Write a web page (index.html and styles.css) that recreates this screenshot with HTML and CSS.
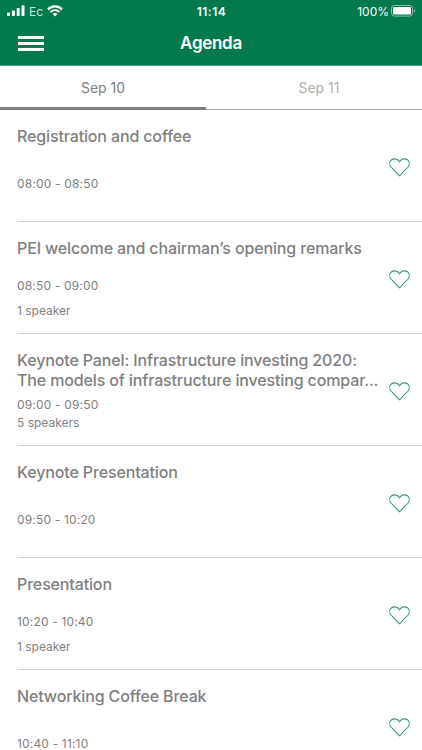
FILE: index.html
```html
<!DOCTYPE html>
<html lang="en">
<head>
    <meta charset="UTF-8">
    <meta name="viewport" content="width=device-width, initial-scale=1.0">
    <title>Agenda</title>
    <link rel="stylesheet" href="styles.css">
</head>
<body>
    <!-- Heart icon shared by all sessions -->
    <svg class="sprite" width="0" height="0">
        <symbol id="heart" viewBox="0 0 22 20">
            <path d="M11 18.8 L2.5 10 C0.2 7.6 0.2 4.3 2.2 2.3 C4.3 0.4 7.7 0.5 9.6 2.4 L11 3.9 L12.4 2.4 C14.3 0.5 17.7 0.4 19.8 2.3 C21.8 4.3 21.8 7.6 19.5 10 Z"/>
        </symbol>
    </svg>

    <header class="header">
        <div class="status">
            <div class="status-left">
                <svg width="18" height="12" viewBox="0 0 18 12" fill="#fff">
                    <rect x="0" y="7.5" width="3" height="3.5" rx="0.8"/>
                    <rect x="4.9" y="5.5" width="3" height="5.5" rx="0.8"/>
                    <rect x="9.7" y="3" width="3" height="8" rx="0.8"/>
                    <rect x="14.5" y="0.3" width="3" height="10.7" rx="0.8"/>
                </svg>
                <span class="carrier">Ec</span>
                <svg width="16" height="12" viewBox="0 0 16 12" fill="none" stroke="#fff" stroke-width="2.1">
                    <path d="M1 4.4 C5 0.4 11 0.4 15 4.4"/>
                    <path d="M3.5 7.1 C6.1 4.6 9.9 4.6 12.5 7.1"/>
                    <path d="M8 11.4 L5.6 9 C7 7.8 9 7.8 10.4 9 Z" fill="#fff" stroke="none"/>
                </svg>
            </div>
            <div class="clock">11:14</div>
            <div class="status-right">
                <span>100%</span>
                <svg width="25" height="12" viewBox="0 0 25 12">
                    <rect x="0.5" y="0.5" width="21" height="10.6" rx="2.8" fill="none" stroke="#8cc0aa"/>
                    <rect x="2" y="2" width="18" height="7.6" rx="1.4" fill="#fff"/>
                    <path d="M23 4 C24.5 4.6 24.5 7 23 7.6 Z" fill="#8cc0aa"/>
                </svg>
            </div>
        </div>
        <div class="navbar">
            <div class="menu">
                <span></span>
                <span></span>
                <span></span>
            </div>
            <h1>Agenda</h1>
        </div>
    </header>

    <nav class="tabs">
        <div class="tab active">Sep 10</div>
        <div class="tab">Sep 11</div>
    </nav>

    <main class="list">
        <div class="session single">
            <div class="info">
                <h2>Registration and coffee</h2>
                <p class="time">08:00 - 08:50</p>
            </div>
            <svg class="heart"><use href="#heart"/></svg>
        </div>
        <div class="session">
            <div class="info">
                <h2>PEI welcome and chairman’s opening remarks</h2>
                <p class="time">08:50 - 09:00</p>
                <p class="speakers">1 speaker</p>
            </div>
            <svg class="heart"><use href="#heart"/></svg>
        </div>
        <div class="session compact">
            <div class="info">
                <h2>Keynote Panel: Infrastructure investing 2020:<br>The models of infrastructure investing compar...</h2>
                <p class="time">09:00 - 09:50</p>
                <p class="speakers">5 speakers</p>
            </div>
            <svg class="heart"><use href="#heart"/></svg>
        </div>
        <div class="session single">
            <div class="info">
                <h2>Keynote Presentation</h2>
                <p class="time">09:50 - 10:20</p>
            </div>
            <svg class="heart"><use href="#heart"/></svg>
        </div>
        <div class="session">
            <div class="info">
                <h2>Presentation</h2>
                <p class="time">10:20 - 10:40</p>
                <p class="speakers">1 speaker</p>
            </div>
            <svg class="heart"><use href="#heart"/></svg>
        </div>
        <div class="session single">
            <div class="info">
                <h2>Networking Coffee Break</h2>
                <p class="time">10:40 - 11:10</p>
            </div>
            <svg class="heart"><use href="#heart"/></svg>
        </div>
    </main>
</body>
</html>
```

FILE: styles.css
```css
* {
    box-sizing: border-box;
}
body {
    margin: 0;
    height: 750px;
    overflow: hidden;
    background: #fff;
    color: #808080;
    font-family: Inter, "Liberation Sans", sans-serif;
}
svg {
    display: block;
}
.sprite {
    display: none;
}
.header {
    height: 66px;
    background: #027a4b;
    color: #fff;
    border-bottom: 1px solid #4c9f7d;
}
.status {
    display: grid;
    grid-template-columns: 1fr auto 1fr;
    align-items: center;
    height: 22px;
    padding: 0 6px 0 7px;
}
.status-left {
    display: flex;
    align-items: center;
}
.carrier {
    margin: 0 4px 0 4px;
    color: #c9e3d8;
    font-size: 12px;
}
.clock {
    font-weight: 600;
    font-size: 12px;
    letter-spacing: 0.5px;
}
.status-right {
    display: flex;
    align-items: center;
    justify-content: flex-end;
    gap: 2px;
    font-size: 12px;
}
.navbar {
    display: grid;
    grid-template-columns: 1fr auto 1fr;
    align-items: center;
    height: 43px;
    padding: 0 18px;
}
.menu {
    display: flex;
    flex-direction: column;
    gap: 3px;
    width: 26px;
}
.menu span {
    height: 3px;
    background: #fff;
}
.navbar h1 {
    margin: 0;
    font-size: 17px;
    font-weight: 600;
    letter-spacing: -0.3px;
    line-height: 20px;
    padding-bottom: 1px;
}
.tabs {
    display: flex;
    height: 44px;
    border-bottom: 1px solid #a6a6a6;
}
.tab {
    flex: 1;
    padding-left: 10px;
    line-height: 44px;
    text-align: center;
    font-size: 14px;
    color: #b0b0b0;
}
.tab.active {
    flex: 0 0 206px;
    height: 44px;
    padding-left: 0;
    color: #808080;
    border-bottom: 3px solid #808080;
}
.session {
    display: flex;
    height: 112px;
    margin-left: 17px;
    border-bottom: 1px solid #d2d2d2;
}
.info {
    display: flex;
    flex-direction: column;
    flex: 1;
    padding: 17px 0 13px;
    white-space: nowrap;
}
.info h2 {
    margin: 0;
    font-size: 16px;
    font-weight: 500;
    line-height: 19.5px;
    letter-spacing: -0.14px;
}
.info p {
    margin: 0;
    line-height: 18px;
    font-size: 12px;
}
.info .time {
    margin-top: auto;
    letter-spacing: 0.17px;
}
.info .speakers {
    margin-top: 7px;
}
.compact .speakers {
    margin-top: 0;
}
.single .info {
    padding-bottom: 28px;
}
.heart {
    width: 21px;
    height: 19px;
    margin: 48px 12px 0 0;
    fill: none;
    stroke: #30916b;
    stroke-width: 1.1;
}
```
